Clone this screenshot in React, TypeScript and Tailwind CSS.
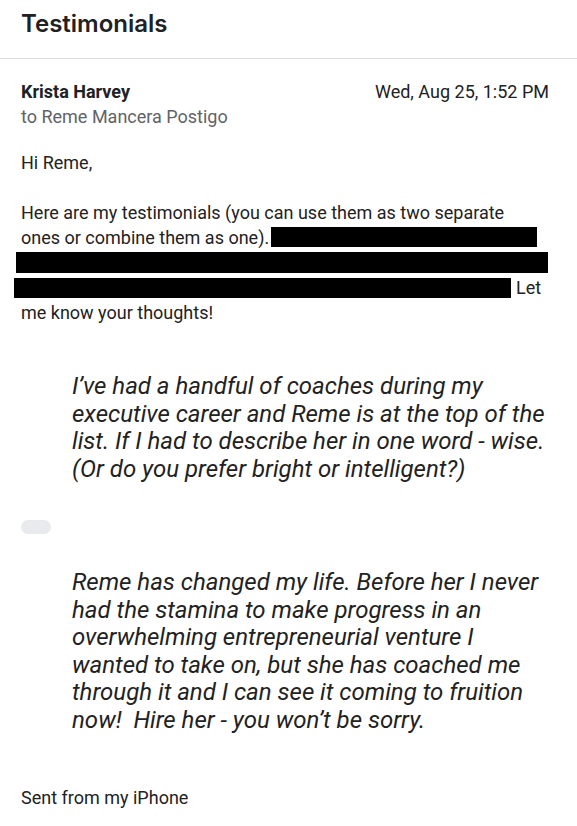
const roboto = { fontFamily: "Roboto, 'Liberation Sans', sans-serif" };

function Redacted({ className }: { className: string }) {
  return <span className={`inline-block bg-black ${className}`} />;
}

export default function App() {
  return (
    <div className="min-h-[826px] w-[577px] bg-white text-[#222]" style={roboto}>
      {/* header */}
      <div className="h-[59px] border-b border-[#dadce0] pl-[21px] pt-[8px]">
        <h1 className="font-['Inter',sans-serif] text-[24px] font-semibold leading-[32px] text-[#202124]">
          Testimonials
        </h1>
      </div>

      <div className="pl-[21px] pr-[28px]">
        {/* sender */}
        <div className="mt-[21px] flex items-start justify-between text-[18px] leading-[24px]">
          <div>
            <div className="font-bold text-[#202124]">Krista Harvey</div>
            <div className="mt-[1px] text-[#5f6368]">to Reme Mancera Postigo</div>
          </div>
          <div className="text-[#202124]">Wed, Aug 25, 1:52 PM</div>
        </div>

        {/* body */}
        <div className="mt-[21px] text-[18px] leading-[25px]">
          <div>Hi Reme,</div>
          <div className="h-[25px]" />
          <div>Here are my testimonials (you can use them as two separate</div>
          <div className="flex items-center">
            <span>ones or combine them as one).</span>
            <Redacted className="ml-[2px] -mt-[2px] h-[20px] w-[266px]" />
          </div>
          <div className="flex h-[25px] items-center">
            <Redacted className="-ml-[5px] h-[21px] w-[532px]" />
          </div>
          <div className="flex h-[25px] items-center">
            <Redacted className="-ml-[7px] h-[20px] w-[497px]" />
            <span className="ml-[5px]">Let</span>
          </div>
          <div>me know your thoughts!</div>
        </div>

        {/* quote 1 */}
        <div className="ml-[51px] mt-[48px] text-[24px] italic leading-[27.5px] text-[#222]">
          I’ve had a handful of coaches during my
          <br />
          executive career and Reme is at the top of the
          <br />
          list. If I had to describe her in one word - wise.
          <br />
          (Or do you prefer bright or intelligent?)
        </div>

        {/* trimmed content pill */}
        <div className="mt-[37px] h-[14px] w-[30px] rounded-full bg-[#e8eaed]" />

        {/* quote 2 */}
        <div className="ml-[51px] mt-[35px] text-[24px] italic leading-[27.5px] text-[#222]">
          Reme has changed my life. Before her I never
          <br />
          had the stamina to make progress in an
          <br />
          overwhelming entrepreneurial venture I
          <br />
          wanted to take on, but she has coached me
          <br />
          through it and I can see it coming to fruition
          <br />
          now!&nbsp; Hire her - you won’t be sorry.
        </div>

        <div className="mt-[51px] text-[18px] leading-[25px]">Sent from my iPhone</div>
      </div>
    </div>
  );
}
